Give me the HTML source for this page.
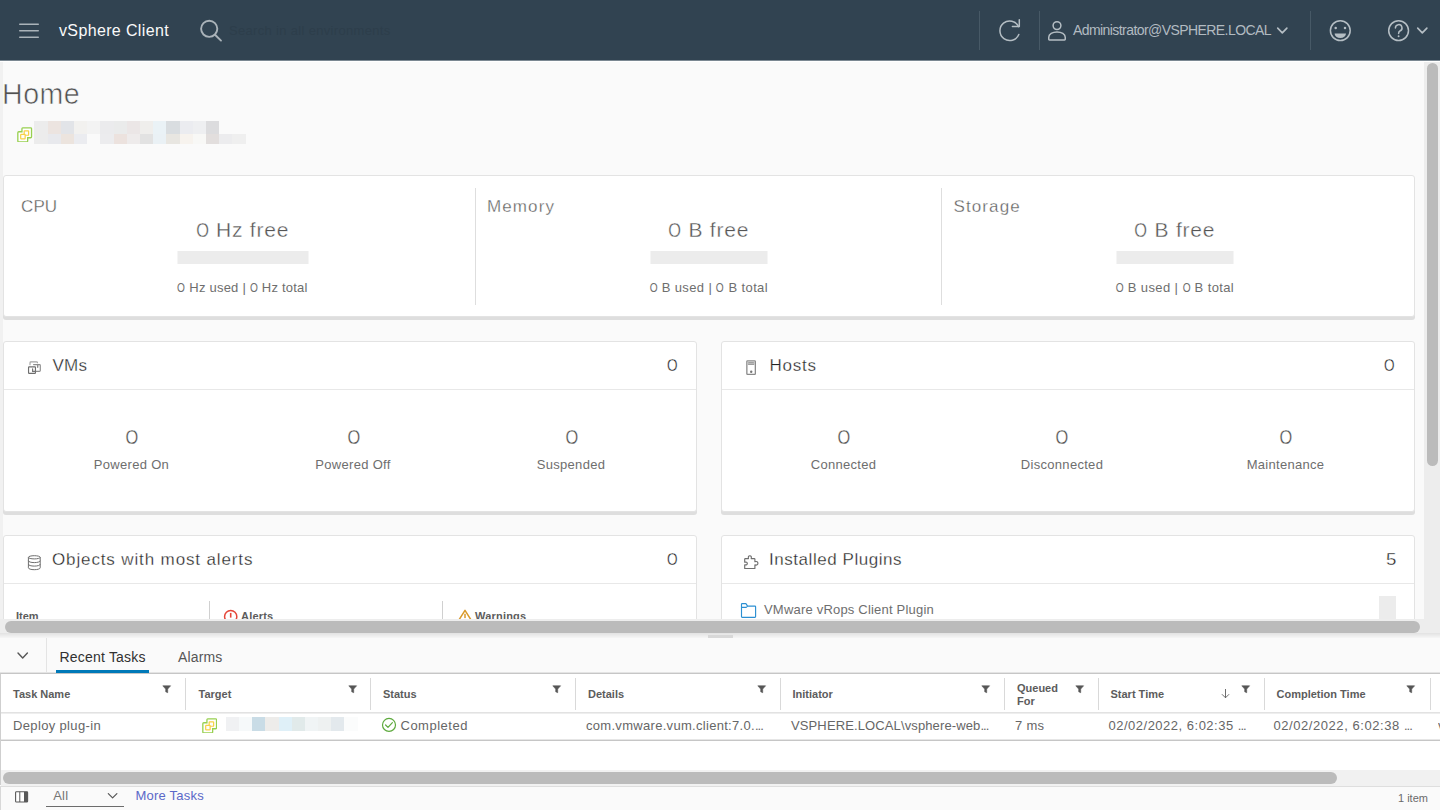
<!DOCTYPE html>
<html>
<head>
<meta charset="utf-8">
<title>vSphere Client</title>
<style>
*{box-sizing:border-box;margin:0;padding:0}
html,body{width:1440px;height:810px;overflow:hidden;background:#fafafa;font-family:"Liberation Sans",sans-serif;color:#565656}
.abs{position:absolute}
.t{position:absolute;white-space:nowrap;line-height:1}
#hdr{left:0;top:0;width:1440px;height:60px;background:#314351}
#hdrline{left:0;top:60px;width:1440px;height:2px;background:linear-gradient(#7b8892 0,#7b8892 40%,#fff 50%,#fff 100%)}
.hdiv{position:absolute;top:11px;width:1px;height:39px;background:#475966}
.card{position:absolute;background:#fff;border:1px solid #e3e3e3;border-radius:3px;box-shadow:0 3px 0 0 #dedede}
.cardline{position:absolute;height:1px;background:#e8e8e8}
.ttl{font-size:17px;color:#222;-webkit-text-stroke:.3px #fff}
.cnt{transform:scaleX(.8);transform-origin:left}
.num{font-size:20px;color:#4f4f4f;-webkit-text-stroke:.3px #fff;transform:translateX(-50%) scaleX(.82)}
.lbl{font-size:13px;color:#6e6e6e;transform:translateX(-50%)}
.big{font-size:21px;-webkit-text-stroke:.35px #fff;color:#555;transform:translateX(-50%)}
.bar{position:absolute;height:13px;background:#ececec;transform:translateX(-50%)}
.gh{font-size:11px;font-weight:bold;color:#5c5c5c}
.gc{font-size:13px;color:#666}
.z{display:inline-block;transform:scaleX(.78);margin:0 -.085em}
.gsep{position:absolute;top:678px;width:1px;height:32px;background:#d9d9d9}
</style>
</head>
<body>
<!-- HEADER -->
<div id="hdr" class="abs">
  <!-- hamburger -->
  <svg class="abs" style="left:18px;top:20px" width="22" height="22" viewBox="0 0 22 22"><g stroke="#aab3b9" stroke-width="1.4" stroke-linecap="round"><line x1="1.7" y1="4.2" x2="20.3" y2="4.2"/><line x1="1.7" y1="10.7" x2="20.3" y2="10.7"/><line x1="1.7" y1="17.2" x2="20.3" y2="17.2"/></g></svg>
  <span class="t" id="brand" style="left:59px;top:22.5px;font-size:16px;letter-spacing:.36px;color:#fafafa">vSphere Client</span>
  <!-- search -->
  <svg class="abs" style="left:198px;top:18px" width="26" height="26" viewBox="0 0 26 26"><g fill="none" stroke="#aab3b9" stroke-width="1.9" stroke-linecap="round"><circle cx="11.2" cy="10.8" r="8.1"/><line x1="17.3" y1="17" x2="23" y2="22.6"/></g></svg>
  <span class="t" style="left:229px;top:24.3px;font-size:13px;color:#2d3e4b;letter-spacing:.32px">Search in all environments</span>
  <div class="hdiv" style="left:979px"></div>
  <!-- refresh -->
  <svg class="abs" style="left:997px;top:18px" width="26" height="26" viewBox="0 0 26 26"><g fill="none" stroke="#b5bec4" stroke-width="1.5" stroke-linecap="round" stroke-linejoin="round"><path d="M21.8 16.5 A9.8 9.8 0 1 1 21.6 8.6"/><path d="M22.3 1.8 V8.6 H15.4"/></g></svg>
  <div class="hdiv" style="left:1039px"></div>
  <!-- user -->
  <svg class="abs" style="left:1046px;top:19px" width="22" height="24" viewBox="0 0 22 24"><g fill="none" stroke="#b5bec4" stroke-width="1.5"><circle cx="11" cy="6.6" r="3.9"/><path d="M2.75 20.2 V18.3 C2.75 15 6.5 13 11 13 S19.25 15 19.25 18.3 V20.2 Q19.25 20.9 18.6 20.9 H3.4 Q2.75 20.9 2.75 20.2 Z"/></g></svg>
  <span class="t" id="user" style="left:1073px;top:23.2px;font-size:14px;letter-spacing:-.57px;color:#b2bbc1">Administrator@VSPHERE.LOCAL</span>
  <svg class="abs" style="left:1275px;top:25px" width="14" height="11" viewBox="0 0 14 11"><path d="M2.7 3.1 L7.3 7.9 L11.9 3.1" fill="none" stroke="#b5bec4" stroke-width="1.6" stroke-linecap="round" stroke-linejoin="round"/></svg>
  <div class="hdiv" style="left:1310px"></div>
  <!-- smiley -->
  <svg class="abs" style="left:1328px;top:18px" width="25" height="25" viewBox="0 0 25 25"><circle cx="12.3" cy="12.6" r="9.9" fill="none" stroke="#b5bec4" stroke-width="1.5"/><circle cx="7.7" cy="9.9" r="1.25" fill="#b5bec4"/><circle cx="17" cy="9.9" r="1.25" fill="#b5bec4"/><path d="M6.6 15.4 H18 A5.7 4.6 0 0 1 6.6 15.4 Z" fill="#b5bec4"/></svg>
  <!-- help -->
  <svg class="abs" style="left:1386px;top:18px" width="25" height="25" viewBox="0 0 25 25"><circle cx="12.6" cy="12.6" r="9.9" fill="none" stroke="#b5bec4" stroke-width="1.5"/><path d="M9.4 9.9 A3.3 3.3 0 1 1 13.9 13 C12.9 13.5 12.6 14 12.6 15.4" fill="none" stroke="#b5bec4" stroke-width="1.5" stroke-linecap="round"/><circle cx="12.6" cy="18.3" r="0.95" fill="#b5bec4"/></svg>
  <svg class="abs" style="left:1415px;top:25px" width="14" height="11" viewBox="0 0 14 11"><path d="M2.7 3.1 L7.3 7.9 L11.9 3.1" fill="none" stroke="#b5bec4" stroke-width="1.6" stroke-linecap="round" stroke-linejoin="round"/></svg>
</div>
<div id="hdrline" class="abs"></div>

<!-- MAIN -->
<div id="main" class="abs" style="left:0;top:0;width:1440px;height:619px;overflow:hidden">
  <div class="abs" style="left:0;top:62px;width:3px;height:557px;background:#f1f1f1"></div>
  <span class="t" id="home" style="left:2px;top:79.8px;font-size:28.6px;color:#505050;letter-spacing:.5px;-webkit-text-stroke:.6px #fafafa">Home</span>
  <svg class="abs" style="left:17px;top:126.8px" width="15.5" height="15.5" viewBox="0 0 16 16"><path d="M6.1 0.85 H14 Q15 0.85 15 1.65 V10.1 Q15 11.1 14 11.1 H11 V14.4 Q11 15.4 10 15.4 H1.85 Q0.85 15.4 0.85 14.4 V5.9 Q0.85 4.9 1.85 4.9 H5.1 V1.85 Q5.1 0.85 5.9 0.85 Z" fill="#fff" stroke="#98d050" stroke-width="1.35"/><rect x="7.4" y="3.9" width="4.6" height="4.6" rx=".6" fill="#fdfdfd" stroke="#f7d145" stroke-width="1.25"/><rect x="3.8" y="7.6" width="4.6" height="4.7" rx=".6" fill="#fdfdfd" stroke="#f7d145" stroke-width="1.25"/></svg><div class="abs" style="left:34.3px;top:121px;width:13.3px;height:13px;background:#ececec"></div><div class="abs" style="left:47.5px;top:121px;width:13.3px;height:13px;background:#ece4e0"></div><div class="abs" style="left:60.7px;top:121px;width:13.3px;height:13px;background:#e2e4e8"></div><div class="abs" style="left:73.9px;top:121px;width:13.3px;height:13px;background:#f2f1ef"></div><div class="abs" style="left:87.1px;top:121px;width:13.3px;height:13px;background:#f3f3f3"></div><div class="abs" style="left:100.3px;top:121px;width:13.3px;height:13px;background:#ebebed"></div><div class="abs" style="left:113.5px;top:121px;width:13.3px;height:13px;background:#eaebeb"></div><div class="abs" style="left:126.7px;top:121px;width:13.3px;height:13px;background:#ebe6e6"></div><div class="abs" style="left:139.9px;top:121px;width:13.3px;height:13px;background:#efeeec"></div><div class="abs" style="left:153.1px;top:121px;width:13.3px;height:13px;background:#eaf2f6"></div><div class="abs" style="left:166.3px;top:121px;width:13.3px;height:13px;background:#d9dde0"></div><div class="abs" style="left:179.5px;top:121px;width:13.3px;height:13px;background:#ebecf0"></div><div class="abs" style="left:192.7px;top:121px;width:13.3px;height:13px;background:#eeeff1"></div><div class="abs" style="left:205.9px;top:121px;width:13.3px;height:13px;background:#dcdcde"></div><div class="abs" style="left:34.3px;top:134px;width:13.3px;height:10px;background:#ececec"></div><div class="abs" style="left:47.5px;top:134px;width:13.3px;height:10px;background:#e8e9ed"></div><div class="abs" style="left:60.7px;top:134px;width:13.3px;height:10px;background:#ece4de"></div><div class="abs" style="left:73.9px;top:134px;width:13.3px;height:10px;background:#ebecf0"></div><div class="abs" style="left:87.1px;top:134px;width:13.3px;height:10px;background:#fafafa"></div><div class="abs" style="left:100.3px;top:134px;width:13.3px;height:10px;background:#ececee"></div><div class="abs" style="left:113.5px;top:134px;width:13.3px;height:10px;background:#ece2de"></div><div class="abs" style="left:126.7px;top:134px;width:13.3px;height:10px;background:#eeebeb"></div><div class="abs" style="left:139.9px;top:134px;width:13.3px;height:10px;background:#e2e2e2"></div><div class="abs" style="left:153.1px;top:134px;width:13.3px;height:10px;background:#eaf1f5"></div><div class="abs" style="left:166.3px;top:134px;width:13.3px;height:10px;background:#e8e6e1"></div><div class="abs" style="left:179.5px;top:134px;width:13.3px;height:10px;background:#f7f3ee"></div><div class="abs" style="left:192.7px;top:134px;width:13.3px;height:10px;background:#f8f8f6"></div><div class="abs" style="left:205.9px;top:134px;width:13.3px;height:10px;background:#e2dedd"></div><div class="abs" style="left:219.1px;top:134px;width:13.3px;height:10px;background:#ececee"></div><div class="abs" style="left:232.3px;top:134px;width:13.3px;height:10px;background:#efefef"></div>
  <!-- RESOURCE CARD -->
  <div class="card" style="left:3px;top:175px;width:1412px;height:142px"></div>
  <div class="abs" style="left:475px;top:188px;width:1px;height:117px;background:#dedede"></div>
  <div class="abs" style="left:941px;top:188px;width:1px;height:117px;background:#dedede"></div>
  <span class="t ttl" style="left:21px;top:198.1px;color:#5e5e5e;letter-spacing:.1px">CPU</span>
  <span class="t ttl" style="left:487px;top:198.1px;color:#5e5e5e;letter-spacing:1.1px">Memory</span>
  <span class="t ttl" style="left:953.5px;top:198.1px;color:#5e5e5e;letter-spacing:1.1px">Storage</span>
  <span class="t big" style="left:242.5px;top:219.3px;letter-spacing:.8px"><span class="z">O</span> Hz free</span>
  <span class="t big" style="left:708.7px;top:219.3px;letter-spacing:.8px"><span class="z">O</span> B free</span>
  <span class="t big" style="left:1174.8px;top:219.3px;letter-spacing:.8px"><span class="z">O</span> B free</span>
  <div class="bar" style="left:242.5px;top:251px;width:131px"></div>
  <div class="bar" style="left:708.7px;top:251px;width:117px"></div>
  <div class="bar" style="left:1174.8px;top:251px;width:117px"></div>
  <span class="t lbl" style="left:242.5px;top:281px;letter-spacing:.22px"><span class="z">O</span> Hz used | <span class="z">O</span> Hz total</span>
  <span class="t lbl" style="left:708.7px;top:281px;letter-spacing:.38px"><span class="z">O</span> B used | <span class="z">O</span> B total</span>
  <span class="t lbl" style="left:1174.8px;top:281px;letter-spacing:.38px"><span class="z">O</span> B used | <span class="z">O</span> B total</span>

  <!-- VMs CARD -->
  <div class="card" style="left:3px;top:341px;width:694px;height:171px"></div>
  <div class="cardline" style="left:4px;top:389px;width:692px"></div>
  <svg class="abs" style="left:27px;top:360px" width="15" height="15" viewBox="0 0 15 15"><g fill="none" stroke-width="1.15" stroke-linecap="round"><path d="M3 4.7 V2.7 Q3 1.8 3.9 1.8 H9.5 Q10.4 1.8 10.5 2.7" stroke="#a4a4a4"/><path d="M6.6 4.6 H12.4 Q13.3 4.6 13.3 5.5 V10.5 Q13.3 11.4 12.4 11.4 H9.2" stroke="#8e8e8e"/><path d="M10.7 5 V7.2" stroke="#8e8e8e" stroke-width="1.4"/><rect x="1.55" y="6.9" width="6.9" height="6.4" rx=".6" fill="#fff" stroke="#6e6e6e"/><path d="M5.6 8.8 V11.3 H8.2" stroke="#747474" stroke-width="1.2"/></g></svg>
  <span class="t ttl" style="left:52.5px;top:356.9px;letter-spacing:.2px">VMs</span>
  <span class="t ttl cnt" style="left:666.5px;top:356.9px">O</span>
  <span class="t num" style="left:131.5px;top:427px">O</span>
  <span class="t num" style="left:353.5px;top:427px">O</span>
  <span class="t num" style="left:571.5px;top:427px">O</span>
  <span class="t lbl" style="left:131.5px;top:458px;letter-spacing:.3px">Powered On</span>
  <span class="t lbl" style="left:353px;top:458px;letter-spacing:.3px">Powered Off</span>
  <span class="t lbl" style="left:571px;top:458px;letter-spacing:.3px">Suspended</span>

  <!-- HOSTS CARD -->
  <div class="card" style="left:721px;top:341px;width:694px;height:171px"></div>
  <div class="cardline" style="left:722px;top:389px;width:692px"></div>
  <svg class="abs" style="left:745px;top:360px" width="12" height="16" viewBox="0 0 12 16"><rect x="1.85" y="0.85" width="8.5" height="13.5" rx=".7" fill="#fff" stroke="#8a8a8a" stroke-width="1.3"/><rect x="2.5" y="1.5" width="7.2" height="3.3" fill="#b9b9b9"/><rect x="3.6" y="2.1" width="5" height=".8" fill="#9a9a9a"/><rect x="3.2" y="4" width="5.8" height=".9" fill="#9a9a9a"/><circle cx="6.2" cy="11.7" r="1.2" fill="#757575"/></svg>
  <span class="t ttl" style="left:769.6px;top:356.9px;letter-spacing:.75px">Hosts</span>
  <span class="t ttl cnt" style="left:1383.5px;top:356.9px">O</span>
  <span class="t num" style="left:843.5px;top:427px">O</span>
  <span class="t num" style="left:1062px;top:427px">O</span>
  <span class="t num" style="left:1285.5px;top:427px">O</span>
  <span class="t lbl" style="left:843.5px;top:458px;letter-spacing:.3px">Connected</span>
  <span class="t lbl" style="left:1062px;top:458px;letter-spacing:.3px">Disconnected</span>
  <span class="t lbl" style="left:1285.5px;top:458px;letter-spacing:.3px">Maintenance</span>

  <!-- ALERTS CARD -->
  <div class="card" style="left:3px;top:535px;width:694px;height:120px"></div>
  <div class="cardline" style="left:4px;top:583px;width:692px"></div>
  <svg class="abs" style="left:26px;top:554px" width="16" height="17" viewBox="0 0 16 17"><g fill="none" stroke="#6f6f6f" stroke-width="1"><path d="M2.4 3.2 V13.8 C2.4 14.9 5 15.7 8.3 15.7 S14.2 14.9 14.2 13.8 V3.2"/><ellipse cx="8.3" cy="3.3" rx="5.9" ry="1.6" fill="#fff"/><path d="M2.4 6.7 C2.4 7.8 5 8.6 8.3 8.6 S14.2 7.8 14.2 6.7"/><path d="M2.4 10.2 C2.4 11.3 5 12.1 8.3 12.1 S14.2 11.3 14.2 10.2"/></g></svg>
  <span class="t ttl" style="left:52px;top:551.2px;letter-spacing:.87px">Objects with most alerts</span>
  <span class="t ttl cnt" style="left:666.5px;top:551.2px">O</span>
  <div class="abs" style="left:209px;top:601px;width:1px;height:18px;background:#d0d0d0"></div>
  <div class="abs" style="left:442px;top:601px;width:1px;height:18px;background:#d0d0d0"></div>
  <span class="t gh" style="left:16px;top:610.8px">Item</span>
  <svg class="abs" style="left:223px;top:609.1px" width="15" height="15" viewBox="0 0 15 15"><circle cx="7.7" cy="7.6" r="6.1" fill="#fff" stroke="#e5473a" stroke-width="1.5"/><line x1="7.7" y1="3.9" x2="7.7" y2="8.6" stroke="#e5473a" stroke-width="1.6"/><circle cx="7.7" cy="10.8" r=".9" fill="#e5473a"/></svg>
  <span class="t gh" style="left:241px;top:610.8px;letter-spacing:.2px">Alerts</span>
  <svg class="abs" style="left:457px;top:608px" width="16" height="16" viewBox="0 0 16 16"><path d="M8 2.3 L14.9 13.3 H1.1 Z" fill="#fff" stroke="#d99a2b" stroke-width="1.5" stroke-linejoin="round"/><line x1="8" y1="5.8" x2="8" y2="10" stroke="#d99a2b" stroke-width="1.5"/><circle cx="8" cy="11.6" r=".8" fill="#d99a2b"/></svg>
  <span class="t gh" style="left:475px;top:610.8px;letter-spacing:.2px">Warnings</span>

  <!-- PLUGINS CARD -->
  <div class="card" style="left:721px;top:535px;width:694px;height:120px"></div>
  <div class="cardline" style="left:722px;top:583px;width:692px"></div>
  <svg class="abs" style="left:742px;top:553px" width="18" height="18" viewBox="0 0 18 18"><path d="M2.7 15.5 V11.9 Q5.3 12.2 5.3 10.5 Q5.3 8.8 2.7 9.1 V6.2 Q2.7 5.6 3.3 5.6 H6.5 Q5.8 2.7 7.85 2.7 Q9.9 2.7 9.2 5.6 H12.3 Q12.9 5.6 12.9 6.2 V8.7 Q15.9 8 15.9 10.3 Q15.9 12.6 12.9 11.9 V15.5 Z" fill="#fff" stroke="#6f6f6f" stroke-width="1.15" stroke-linejoin="round"/></svg>
  <span class="t ttl" style="left:769px;top:551.2px;letter-spacing:.55px">Installed Plugins</span>
  <span class="t ttl" style="left:1386px;top:551.2px;transform:scaleX(1.1);transform-origin:left">5</span>
  <svg class="abs" style="left:740px;top:602px" width="17" height="17" viewBox="0 0 17 17"><path d="M1.5 14.6 V2.3 Q1.5 1.6 2.2 1.6 H5.9 L7.6 4.1 H14.9 Q15.6 4.1 15.6 4.8 V14.6 Q15.6 15.3 14.9 15.3 H2.2 Q1.5 15.3 1.5 14.6 Z M1.5 5.3 H6.2 L7.6 4.1" fill="#fff" stroke="#2b8fd2" stroke-width="1.15" stroke-linejoin="round"/></svg>
  <span class="t lbl" style="left:764px;top:603px;transform:none;letter-spacing:.2px">VMware vRops Client Plugin</span>
  <div class="abs" style="left:1379px;top:596px;width:17px;height:23px;background:#ececec"></div>


</div>

<!-- main scrollbars (cover clipped content) -->
  <div class="abs" style="left:0;top:619px;width:1440px;height:15px;background:#ededed"></div>
  <div class="abs" style="left:1424px;top:62px;width:16px;height:572px;background:#ededed"></div>
  <div class="abs" style="left:1427px;top:63px;width:11px;height:402.5px;border-radius:5.5px;background:#bbbbbb"></div>
  <div class="abs" style="left:5px;top:621px;width:1415px;height:12px;border-radius:6px;background:#bbbbbb"></div>
  <div class="abs" style="left:0;top:633px;width:1440px;height:5px;background:linear-gradient(#e2e2e2,#f6f6f6)"></div>

<!-- BOTTOM PANEL -->
<div id="bottom">
  <div class="abs" style="left:0;top:638px;width:1440px;height:172px;background:#fafafa"></div>
  <div class="abs" style="left:708px;top:634.6px;width:25px;height:3.4px;background:#d8d8d8"></div>
  <!-- tabs -->
  <svg class="abs" style="left:16px;top:650px" width="14" height="11" viewBox="0 0 14 11"><path d="M2 3 L6.7 7.9 L11.4 3" fill="none" stroke="#565656" stroke-width="1.4" stroke-linecap="round" stroke-linejoin="round"/></svg>
  <div class="abs" style="left:46px;top:638px;width:1px;height:35px;background:#e4e4e4"></div>
  <span class="t" style="left:59.5px;top:649.5px;font-size:14px;color:#313131;letter-spacing:.2px">Recent Tasks</span>
  <div class="abs" style="left:56px;top:670px;width:93px;height:3px;background:#0079b8;z-index:2"></div>
  <span class="t" style="left:178px;top:649.5px;font-size:14px;color:#565656;letter-spacing:.15px">Alarms</span>
  <!-- grid -->
  <div class="abs" style="left:0;top:672px;width:1440px;height:1px;background:#e4e4e4"></div><div class="abs" style="left:0;top:673px;width:1440px;height:112px;background:#fff;border-top:1px solid #c6c6c6;border-left:1px solid #cfcfcf"></div>
  <div class="abs" style="left:1px;top:712px;width:1439px;height:2px;background:linear-gradient(#e2e2e2 50%,#eeeeee 50%)"></div>
  <div class="abs" style="left:1px;top:739px;width:1439px;height:2px;background:linear-gradient(#e6e6e6 50%,#c6c6c6 50%)"></div>
  <div class="gsep" style="left:185px"></div><div class="gsep" style="left:370px"></div><div class="gsep" style="left:575px"></div><div class="gsep" style="left:780px"></div><div class="gsep" style="left:1004px"></div><div class="gsep" style="left:1098px"></div><div class="gsep" style="left:1264px"></div><div class="gsep" style="left:1430px"></div>
  <svg class="abs" style="left:162.4px;top:684.5px" width="10" height="9" viewBox="0 0 10 9"><path d="M0.8 0.8 H8.6 L5.7 4.1 V7.7 L3.7 6.8 V4.1 Z" fill="#565656" stroke="#565656" stroke-width=".6" stroke-linejoin="round"/></svg><svg class="abs" style="left:347.9px;top:684.5px" width="10" height="9" viewBox="0 0 10 9"><path d="M0.8 0.8 H8.6 L5.7 4.1 V7.7 L3.7 6.8 V4.1 Z" fill="#565656" stroke="#565656" stroke-width=".6" stroke-linejoin="round"/></svg><svg class="abs" style="left:552.4px;top:684.5px" width="10" height="9" viewBox="0 0 10 9"><path d="M0.8 0.8 H8.6 L5.7 4.1 V7.7 L3.7 6.8 V4.1 Z" fill="#565656" stroke="#565656" stroke-width=".6" stroke-linejoin="round"/></svg><svg class="abs" style="left:757.4px;top:684.5px" width="10" height="9" viewBox="0 0 10 9"><path d="M0.8 0.8 H8.6 L5.7 4.1 V7.7 L3.7 6.8 V4.1 Z" fill="#565656" stroke="#565656" stroke-width=".6" stroke-linejoin="round"/></svg><svg class="abs" style="left:981.4px;top:684.5px" width="10" height="9" viewBox="0 0 10 9"><path d="M0.8 0.8 H8.6 L5.7 4.1 V7.7 L3.7 6.8 V4.1 Z" fill="#565656" stroke="#565656" stroke-width=".6" stroke-linejoin="round"/></svg><svg class="abs" style="left:1075.4px;top:684.5px" width="10" height="9" viewBox="0 0 10 9"><path d="M0.8 0.8 H8.6 L5.7 4.1 V7.7 L3.7 6.8 V4.1 Z" fill="#565656" stroke="#565656" stroke-width=".6" stroke-linejoin="round"/></svg><svg class="abs" style="left:1241.4px;top:684.5px" width="10" height="9" viewBox="0 0 10 9"><path d="M0.8 0.8 H8.6 L5.7 4.1 V7.7 L3.7 6.8 V4.1 Z" fill="#565656" stroke="#565656" stroke-width=".6" stroke-linejoin="round"/></svg><svg class="abs" style="left:1406.4px;top:684.5px" width="10" height="9" viewBox="0 0 10 9"><path d="M0.8 0.8 H8.6 L5.7 4.1 V7.7 L3.7 6.8 V4.1 Z" fill="#565656" stroke="#565656" stroke-width=".6" stroke-linejoin="round"/></svg>
  <span class="t gh" style="left:13px;top:689.1px">Task Name</span><span class="t gh" style="left:198.5px;top:689.1px">Target</span><span class="t gh" style="left:383px;top:689.1px">Status</span><span class="t gh" style="left:588px;top:689.1px">Details</span><span class="t gh" style="left:792.5px;top:689.1px">Initiator</span><span class="t gh" style="left:1110.5px;top:689.1px">Start Time</span><span class="t gh" style="left:1276.5px;top:689.1px">Completion Time</span>
  <span class="t gh" style="left:1017px;top:682.9px">Queued</span>
  <span class="t gh" style="left:1017px;top:695.9px">For</span>
  <svg class="abs" style="left:1220px;top:687px" width="10" height="12" viewBox="0 0 10 12"><path d="M5.5 2.4 V10.6 M2.2 7.5 L5.5 10.8 L8.8 7.5" fill="none" stroke="#666" stroke-width=".95" stroke-linecap="round" stroke-linejoin="round"/></svg>
  <!-- row -->
  <span class="t gc" style="left:13px;top:719.1px;letter-spacing:.35px">Deploy plug-in</span>
  <svg class="abs" style="left:201.8px;top:717.9px" width="15.5" height="15.5" viewBox="0 0 16 16"><path d="M6.1 0.85 H14 Q15 0.85 15 1.65 V10.1 Q15 11.1 14 11.1 H11 V14.4 Q11 15.4 10 15.4 H1.85 Q0.85 15.4 0.85 14.4 V5.9 Q0.85 4.9 1.85 4.9 H5.1 V1.85 Q5.1 0.85 5.9 0.85 Z" fill="#fff" stroke="#98d050" stroke-width="1.35"/><rect x="7.4" y="3.9" width="4.6" height="4.6" rx=".6" fill="#fdfdfd" stroke="#f7d145" stroke-width="1.25"/><rect x="3.8" y="7.6" width="4.6" height="4.7" rx=".6" fill="#fdfdfd" stroke="#f7d145" stroke-width="1.25"/></svg><div class="abs" style="left:226.0px;top:717px;width:13.3px;height:13.5px;background:#f0f1f3"></div><div class="abs" style="left:239.2px;top:717px;width:13.3px;height:13.5px;background:#f6f9fa"></div><div class="abs" style="left:252.3px;top:717px;width:13.3px;height:13.5px;background:#c9dce6"></div><div class="abs" style="left:265.4px;top:717px;width:13.3px;height:13.5px;background:#edecea"></div><div class="abs" style="left:278.6px;top:717px;width:13.3px;height:13.5px;background:#dff0f8"></div><div class="abs" style="left:291.8px;top:717px;width:13.3px;height:13.5px;background:#e1eaea"></div><div class="abs" style="left:304.9px;top:717px;width:13.3px;height:13.5px;background:#f0f4f5"></div><div class="abs" style="left:318.1px;top:717px;width:13.3px;height:13.5px;background:#eef1f1"></div><div class="abs" style="left:331.2px;top:717px;width:13.3px;height:13.5px;background:#e3e9ed"></div><div class="abs" style="left:344.4px;top:717px;width:13.3px;height:13.5px;background:#fbfcfc"></div>
  <svg class="abs" style="left:381px;top:717px" width="16" height="16" viewBox="0 0 16 16"><circle cx="8" cy="7.9" r="6.5" fill="#fff" stroke="#5eaa3e" stroke-width="1.2"/><path d="M4.6 8 L7 10.4 L11.4 5.6" fill="none" stroke="#5eaa3e" stroke-width="1.2" stroke-linecap="round" stroke-linejoin="round"/></svg>
  <span class="t gc" style="left:400.5px;top:719.1px;letter-spacing:.5px">Completed</span>
  <span class="t gc" id="c_det" style="left:586px;top:719.1px;letter-spacing:.3px">com.vmware.vum.client:7.0.<span style="letter-spacing:-1px">...</span></span>
  <span class="t gc" id="c_ini" style="left:791px;top:719.1px;letter-spacing:.12px">VSPHERE.LOCAL\vsphere-web<span style="letter-spacing:-1px">...</span></span>
  <span class="t gc" style="left:1015px;top:719.1px;letter-spacing:.3px">7 ms</span>
  <span class="t gc" id="c_st" style="left:1108.5px;top:719.1px;letter-spacing:.5px">02/02/2022, 6:02:35 <span style="letter-spacing:-1px">...</span></span>
  <span class="t gc" id="c_ct" style="left:1273.5px;top:719.1px;letter-spacing:.56px">02/02/2022, 6:02:38 <span style="letter-spacing:-1px">...</span></span>
  <div class="abs" style="left:1438px;top:715px;width:2px;height:22px;overflow:hidden"><span class="t gc" style="left:0;top:4.1px">v</span></div>
  <!-- grid h-scrollbar -->
  <div class="abs" style="left:1px;top:770px;width:1439px;height:16px;background:#f1f1f1"></div>
  <div class="abs" style="left:3px;top:772px;width:1334px;height:11.5px;border-radius:6px;background:#bbbbbb"></div>
  <!-- footer -->
  <div class="abs" style="left:0;top:786px;width:1440px;height:24px;background:#fafafa;border-top:1px solid #dedede;border-left:1px solid #d8d8d8"></div>
  <svg class="abs" style="left:14px;top:790px" width="16" height="14" viewBox="0 0 16 14"><rect x="1.6" y="1.8" width="12" height="10.2" rx=".8" fill="#fff" stroke="#585858" stroke-width="1.1"/><line x1="5.8" y1="1.8" x2="5.8" y2="12" stroke="#585858" stroke-width="1"/><rect x="10" y="1.8" width="3.6" height="10.2" fill="#585858"/></svg>
  <span class="t" style="left:53.2px;top:788.5px;font-size:13px;color:#757575;letter-spacing:.2px">All</span>
  <svg class="abs" style="left:106px;top:790.5px" width="13" height="10" viewBox="0 0 13 10"><path d="M2.3 2.6 L6.6 6.9 L10.9 2.6" fill="none" stroke="#565656" stroke-width="1.2" stroke-linecap="round" stroke-linejoin="round"/></svg>
  <div class="abs" style="left:46px;top:805.5px;width:77.5px;height:1px;background:#6c6c6c"></div>
  <span class="t" style="left:135.5px;top:788.5px;font-size:13px;color:#5b68c8;letter-spacing:.22px">More Tasks</span>
  <span class="t" style="left:1398px;top:793px;font-size:11px;color:#6a6a6a">1 item</span>
</div>
</body>
</html>
